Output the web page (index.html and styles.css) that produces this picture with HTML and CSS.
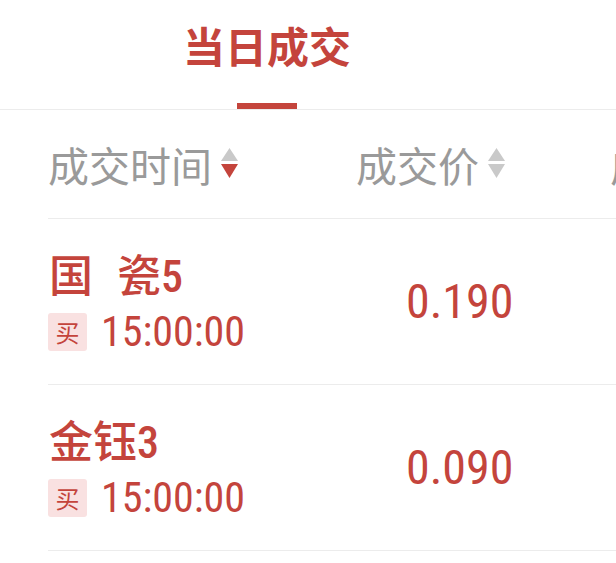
FILE: index.html
```html
<!DOCTYPE html>
<html lang="zh-CN">
<head>
<meta charset="utf-8">
<title>当日成交</title>
<link rel="stylesheet" href="styles.css">
</head>
<body>
<div class="page">
  <div class="tabs">
    <div class="tab active">
      <span class="tab-label">当日成交</span>
      <span class="tab-bar"></span>
    </div>
  </div>
  <div class="head">
    <div class="hcell c1">
      <span>成交时间</span>
      <svg class="sort" width="17" height="30" viewBox="0 0 17 30"><polygon points="0,13 8.5,0 17,13" fill="#c9c9c9"/><polygon points="0,16 17,16 8.5,30" fill="#c4443c"/></svg>
    </div>
    <div class="hcell c2">
      <span>成交价</span>
      <svg class="sort" width="17" height="30" viewBox="0 0 17 30"><polygon points="0,13 8.5,0 17,13" fill="#c9c9c9"/><polygon points="0,16 17,16 8.5,30" fill="#c9c9c9"/></svg>
    </div>
    <div class="hcell c3"><span>成交量</span></div>
  </div>
  <div class="row">
    <div class="c1 left">
      <div class="name">国 瓷5</div>
      <div class="meta"><span class="badge">买</span><span class="time">15:00:00</span></div>
    </div>
    <div class="c2 price">0.190</div>
  </div>
  <div class="row">
    <div class="c1 left">
      <div class="name">金钰3</div>
      <div class="meta"><span class="badge">买</span><span class="time">15:00:00</span></div>
    </div>
    <div class="c2 price">0.090</div>
  </div>
</div>
</body>
</html>
```
FILE: styles.css
```css
html, body {
  margin: 0;
  padding: 0;
  background: #ffffff;
}
body {
  font-family: "Noto Sans CJK SC", "Noto Sans", sans-serif;
  overflow: hidden;
}
.page {
  width: 616px;
  height: 563px;
  overflow: hidden;
}
.tabs {
  height: 109px;
  border-bottom: 1px solid #ececec;
  display: flex;
  padding-left: 183px;
  box-sizing: content-box;
}
.tab {
  display: flex;
  flex-direction: column;
  align-items: center;
  justify-content: space-between;
  padding-top: 21px;
}
.tab-label {
  font-size: 42px;
  line-height: 48px;
  font-weight: 700;
  color: #c4443c;
}
.tab-bar {
  width: 60px;
  height: 6px;
  background: #c4443c;
}
.head {
  margin-left: 48px;
  height: 108px;
  border-bottom: 1px solid #ececec;
  display: flex;
  align-items: center;
  white-space: nowrap;
}
.hcell {
  display: flex;
  align-items: center;
  font-size: 41px;
  line-height: 48px;
  color: #9a9a9a;
}
.c1 {
  width: 308px;
  flex: none;
}
.c2 {
  width: 254px;
  flex: none;
}
.c3 {
  flex: none;
}
.sort {
  margin-left: 9px;
  margin-top: -2px;
}
.row {
  margin-left: 48px;
  height: 165px;
  border-bottom: 1px solid #ececec;
  display: flex;
  align-items: center;
  color: #c4443c;
}
.left {
  display: flex;
  flex-direction: column;
  padding-top: 2px;
}
.name {
  font-family: "Roboto Condensed", "Liberation Sans Narrow", "Noto Sans CJK SC", sans-serif;
  font-size: 44px;
  line-height: 50px;
  font-weight: 500;
  word-spacing: 14px;
  padding-left: 1px;
}
.meta {
  display: flex;
  align-items: center;
  margin-top: 8px;
}
.badge {
  width: 39px;
  height: 38px;
  border-radius: 3px;
  background: #f9e1e1;
  color: #c4443c;
  font-size: 24px;
  line-height: 38px;
  text-align: center;
}
.time {
  font-family: "Roboto Condensed", "Liberation Sans Narrow", "Roboto", sans-serif;
  font-size: 42px;
  line-height: 44px;
  font-weight: 400;
  margin-left: 14px;
}
.price {
  font-family: "Roboto Condensed", "Liberation Sans Narrow", "Roboto", sans-serif;
  font-size: 48px;
  line-height: 50px;
  font-weight: 400;
  padding-left: 50px;
  box-sizing: border-box;
}
```
